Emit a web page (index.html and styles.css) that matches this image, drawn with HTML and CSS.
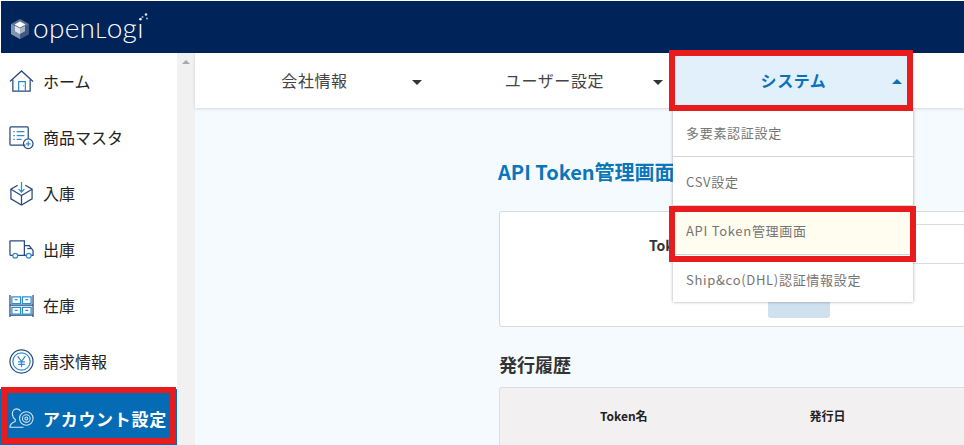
FILE: index.html
```html
<!DOCTYPE html>
<html lang="ja">
<head>
<meta charset="utf-8">
<title>API Token管理画面</title>
<link rel="stylesheet" href="styles.css">
</head>
<body>
<div class="app">
  <header class="topbar">
    <svg class="logo-mark" viewBox="0 0 20 22" width="20" height="22">
      <path d="M10 1l9 5v10l-9 5-9-5V6z" fill="#5d7393"/>
      <path d="M10 11l9-5v10l-9 5z" fill="#3e5880"/>
      <path d="M10 11L1 6v10l9 5z" fill="#8295b0"/>
      <path d="M10 3.500l5.500 3-5.500 3-5.500-3z" fill="#fff"/>
      <path d="M10 10.500l5-2.700v5.400L10 16z" fill="#a9b6c9"/>
      <path d="M10 10.500L5 7.800v5.400L10 16z" fill="#dfe4ec"/>
    </svg>
    <span class="logo-text">open<span class="logo-cap">L</span>ogi</span>
    <svg class="logo-dots" viewBox="0 0 8 8" width="8" height="8"><circle cx="5" cy="1.500" r="1.300" fill="#dfe4ec"/><circle cx="1.500" cy="4" r="1" fill="#a9b6c9"/><circle cx="6" cy="5.500" r="1" fill="#a9b6c9"/></svg>
  </header>
  <div class="body">
    <aside class="sidebar">
      <a class="side-item">
        <svg class="side-icon" viewBox="0 0 26 24"><path d="M1 12L13 1l12 11" class="dk"/><path d="M4 10v12h18V10" class="dk"/><path d="M10 22V12h7v10" class="bl"/><path d="M14.500 16.500h.8" class="bl"/></svg>
        <span>ホーム</span>
      </a>
      <a class="side-item">
        <svg class="side-icon" viewBox="0 0 26 24"><path d="M17 20H2a1 1 0 0 1-1-1V2a1 1 0 0 1 1-1h17a1 1 0 0 1 1 1v11" class="dk"/><path d="M4.500 6h1.500M8 6h8M4.500 10h1.500M8 10h8M4.500 14h1.500M8 14h5" class="bl"/><circle cx="20" cy="18.500" r="5" class="dk"/><path d="M20 16v5M17.500 18.500h5" class="bl"/></svg>
        <span>商品マスタ</span>
      </a>
      <a class="side-item">
        <svg class="side-icon" viewBox="0 0 26 26"><path d="M9 4.500L2 8.500v10l11 6.500 11-6.500v-10l-7-4" class="dk"/><path d="M2 8.500L13 15l11-6.500M13 15v10" class="dk"/><path d="M13 1v10M10 8.500l3 3 3-3" class="bl"/></svg>
        <span>入庫</span>
      </a>
      <a class="side-item">
        <svg class="side-icon" viewBox="0 0 26 20"><path d="M4 16H1.500a.5.500 0 0 1-.5-.5V1.500a.500.500 0 0 1 .5-.5H16v15H9" class="dk"/><path d="M16 6h5l4 5v5h-2M18 16h-2" class="dk"/><path d="M19 9h4" class="dk"/><circle cx="6.500" cy="16.500" r="2.500" class="bl"/><circle cx="20.500" cy="16.500" r="2.500" class="bl"/></svg>
        <span>出庫</span>
      </a>
      <a class="side-item">
        <svg class="side-icon" viewBox="0 0 26 24"><path d="M1 1v23M25 1v23M1 11.500h24M1 22h24" class="dk"/><path d="M3 3h9v7H3zM14 3h9v7h-9zM3 14h9v7H3zM14 14h9v7h-9zM6 6h3M17 6h3M6 17h3M17 17h3" class="bl"/></svg>
        <span>在庫</span>
      </a>
      <a class="side-item">
        <svg class="side-icon" viewBox="0 0 26 26"><circle cx="13" cy="13" r="12" class="dk"/><circle cx="13" cy="13" r="9" class="bl"/><path d="M9 7.500l4 5.500 4-5.500M13 13v6M9.500 13.500h7M9.500 16h7" class="bl"/></svg>
        <span>請求情報</span>
      </a>
      <a class="side-item is-active">
        <svg class="side-icon" viewBox="0 0 26 24"><path d="M12 4.500C11 2.500 9.500 2 8 2 5 2 3.500 4.500 3.500 7c0 2.500 1 4.500 3 6v2c-2 1-5.500 2-5.500 6h14" class="wh"/><circle cx="18" cy="12" r="7" class="wh"/><circle cx="18" cy="12" r="4" class="wh"/><circle cx="18" cy="12" r="1.500" class="wh"/></svg>
        <span>アカウント設定</span>
      </a>
    </aside>
    <div class="scrollbar"><span class="scroll-up"></span></div>
    <main class="main">
      <nav class="tabs">
        <div class="tab"><span class="tab-label">会社情報</span><span class="caret"></span></div>
        <div class="tab tab-user"><span class="tab-label">ユーザー設定</span><span class="caret"></span></div>
        <div class="tab tab-active">
          <span class="tab-label">システム</span><span class="caret caret-up"></span>
          <ul class="menu">
            <li class="menu-item">多要素認証設定</li>
            <li class="menu-item">CSV設定</li>
            <li class="menu-item is-hover">API Token管理画面</li>
            <li class="menu-item">Ship&amp;co(DHL)認証情報設定</li>
          </ul>
        </div>
      </nav>
      <section class="content">
        <h1 class="title">API Token管理画面</h1>
        <div class="card">
          <div class="card-head"></div>
          <div class="card-row"><span class="card-label">Token名</span></div>
          <div class="card-foot"><button class="issue-btn"></button></div>
        </div>
        <h2 class="subtitle">発行履歴</h2>
        <div class="history">
          <span class="col col-name">Token名</span>
          <span class="col col-date">発行日</span>
        </div>
      </section>
    </main>
  </div>
  <div class="mark mark-tab"></div>
  <div class="mark mark-item"></div>
  <div class="mark mark-side"></div>
</div>
</body>
</html>
```
FILE: styles.css
```css
* { box-sizing: border-box; }
html, body { margin: 0; padding: 0; }
body {
  font-family: "Noto Sans CJK JP", "Noto Sans", sans-serif;
  color: #333;
  background: #fff;
}
.app { position: relative; width: 964px; height: 445px; overflow: hidden; display: flex; flex-direction: column; }
.topbar {
  height: 53px; flex: none; margin: 1px 0 0 1px; background: #00235a;
  display: flex; align-items: center; padding-left: 9px; gap: 3px;
}
.logo-mark { flex: none; margin-top: 3px; }
.logo-text {
  font-family: "Lato", sans-serif; font-weight: 300; font-size: 28px; line-height: 30px;
  color: #fff; letter-spacing: .3px; margin-top: 1px;
}
.logo-cap { font-size: 22px; }
.logo-dots { flex: none; margin: -21px 0 0 -6px; }
.body { flex: 1; display: flex; min-height: 0; margin-top: -1px; }
.sidebar {
  width: 177px; flex: none; background: #fff;
  display: flex; flex-direction: column;
}
.side-item {
  height: 56px; flex: none; display: flex; align-items: center; gap: 9px;
  padding-left: 9px; font-size: 16px; color: #222;
}
.side-icon { width: 25px; height: 25px; flex: none; fill: none; }
.side-icon .dk { stroke: #2b4a7c; stroke-width: 1.300; fill: none; }
.side-icon .bl { stroke: #2e8dd0; stroke-width: 1.300; fill: none; }
.side-icon .wh { stroke: #dbe8f4; stroke-width: 1.100; fill: none; }
.side-item.is-active {
  background: #056bb5; color: #fff; font-weight: 700; height: 58px; font-size: 17px; letter-spacing: .7px;
}
.scrollbar { width: 18px; flex: none; background: #f1f1f1; display: flex; justify-content: center; padding: 7px 1px 0 0; }
.scroll-up { width: 0; height: 0; border-left: 4px solid transparent; border-right: 4px solid transparent; border-bottom: 4px solid #a8a8a8; }
.main { flex: 1; min-width: 0; display: flex; flex-direction: column; background: #f5faff; }
.tabs {
  height: 55px; flex: none; background: #fff; display: flex;
  box-shadow: 0 1px 3px rgba(0,0,0,.14); position: relative; z-index: 2;
}
.tab {
  width: 239px; flex: none; position: relative; display: flex; align-items: center;
  font-size: 16px; letter-spacing: .6px; color: #444; padding-right: 12px;
}
.tab-label { flex: 1; text-align: center; padding: 0 0 1px 22px; }
.tab-user { padding-right: 10px; }
.caret { width: 0; height: 0; border-left: 5px solid transparent; border-right: 5px solid transparent; border-top: 5px solid #333; margin-top: 3px; }
.tab-active { width: 240px; background: #e1f0fb; color: #0b72b9; font-weight: 700; padding-right: 11px; }
.caret-up { border-top: 0; border-bottom: 5px solid #0b72b9; margin-top: 2px; }
.menu {
  position: absolute; left: 0; top: 55px; width: 240px; margin: 0; padding: 0; list-style: none;
  background: #fff; box-shadow: 0 0 3px rgba(0,0,0,.35); z-index: 3;
}
.menu-item {
  height: 49px; display: flex; align-items: center; padding-left: 13px; font-size: 13px; font-weight: 400;
  color: #757575; border-bottom: 1px solid #d4d4d4; letter-spacing: .7px;
}
.menu-item:last-child { border-bottom: 0; height: 47px; padding-top: 2px; }
.menu-item.is-hover { background: #fffcf0; }
.content { flex: 1; padding-left: 304px; width: 900px; }
.title { margin: 49px 0 0 -1px; font-size: 20px; line-height: 30px; font-weight: 700; color: #0b76b8; }
.card {
  margin-top: 24px; width: 560px; height: 116px; background: #fff; border: 1px solid #d9d9d9; border-radius: 3px;
  display: flex; flex-direction: column;
}
.card-head { height: 13px; border-bottom: 1px solid #dcdcdc; flex: none; margin-left: 410px; }
.card-row { height: 39px; flex: none; position: relative; display: flex; align-items: center; padding: 1px 0 0 149px; font-size: 14px; font-weight: 700; color: #333; }
.card-row::after { content: ""; position: absolute; left: 410px; right: 0; bottom: 0; height: 1px; background: #dcdcdc; }
.card-foot { flex: 1; display: flex; justify-content: flex-start; align-items: flex-end; padding: 0 0 8px 268px; }
.issue-btn { width: 62px; height: 30px; border: 0; border-radius: 3px; background: #cfe0ee; padding: 0; }
.subtitle { margin: 24px 0 0; font-size: 18px; line-height: 26px; font-weight: 700; color: #333; }
.history {
  margin-top: 10px; width: 560px; height: 70px; background: #f3f0f1; border: 1px solid #ddd; border-radius: 3px;
  display: flex; padding-top: 19px; font-size: 12px; font-weight: 700; color: #222;
}
.col { line-height: 18px; }
.col-name { margin-left: 100px; }
.col-date { margin-left: 162px; }
.mark { position: absolute; border: 6px solid #e81c1c; z-index: 5; }
.mark-tab { left: 669px; top: 50px; width: 244px; height: 61px; }
.mark-item { left: 669px; top: 206px; width: 247px; height: 56px; }
.mark-side { left: 1px; top: 387px; width: 175px; height: 57px; }
```
